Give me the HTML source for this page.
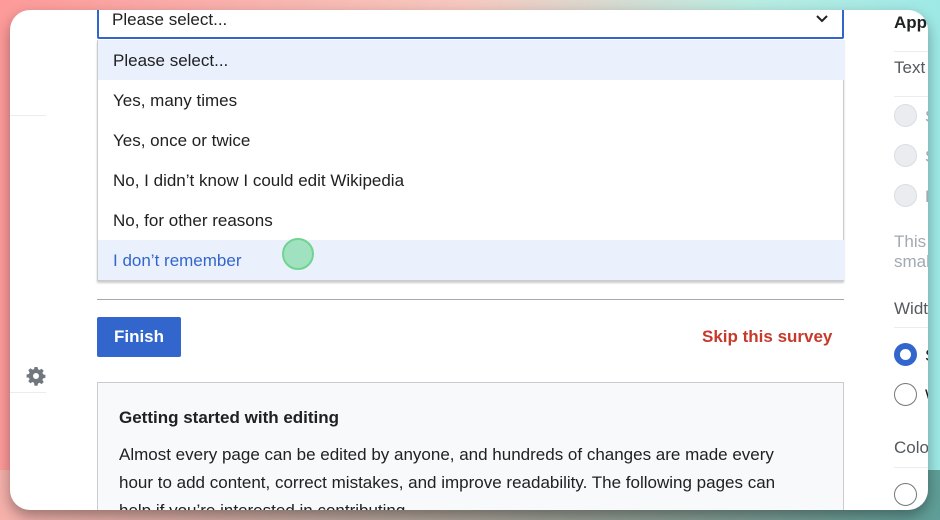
<!DOCTYPE html>
<html><head><style>
body{margin:0;width:940px;height:520px;overflow:hidden;background:linear-gradient(90deg,#fd9a9a 0%,#f6c9c0 50%,#b9ece2 80%,#9ee9e6 100%);font-family:"Liberation Sans",sans-serif;position:relative}
.bot{position:absolute;left:0;top:470px;width:940px;height:50px;background:linear-gradient(90deg,#f6b1ab,#c8a9a0 30%,#9a9f95 60%,#5f9e98)}
.card{position:absolute;left:10px;top:10px;width:918px;height:500px;background:#fff;border-radius:20px;overflow:hidden;box-shadow:0 6px 14px rgba(0,0,0,.35)}
.a{position:absolute}
.t{font-size:17px;color:#202122}
.item{position:absolute;left:0;width:747px;height:40px;line-height:42px;padding-left:15px;box-sizing:border-box;font-size:17px;color:#202122}
</style></head><body>
<div class="bot"></div>
<div class="card">
 <div class="a" style="left:0;top:105px;width:36px;height:1px;background:#eaecf0"></div>
 <div class="a" style="left:0;top:382px;width:36px;height:1px;background:#eaecf0"></div>
 <svg class="a" style="left:16px;top:356px" width="20" height="20" viewBox="0 0 20 20"><path fill="#72777d" d="M8.5 1h3l.5 2.3 1.6.7 2-1.3 2.1 2.1-1.3 2 .7 1.6 2.3.5v3l-2.3.5-.7 1.6 1.3 2-2.1 2.1-2-1.3-1.6.7-.5 2.3h-3L8 16.7l-1.6-.7-2 1.3-2.1-2.1 1.3-2-.7-1.6L.6 11.5v-3L2.9 8l.7-1.6-1.3-2 2.1-2.1 2 1.3L8 3.3zM10 7a3 3 0 100 6 3 3 0 000-6z"/></svg>

 <div class="a" style="left:87px;top:-20px;width:747px;height:49px;border:2px solid #36c;border-radius:2px;box-sizing:border-box"></div>
 <div class="a t" style="left:102px;top:0px">Please select...</div>
 <svg class="a" style="left:805px;top:4px" width="14" height="10" viewBox="0 0 14 10"><path d="M2 2l5 5 5-5" stroke="#202122" stroke-width="2" fill="none"/></svg>

 <div class="a" style="left:87px;top:30px;width:747px;height:241px;border:1px solid #c8ccd1;border-top:none;box-sizing:border-box;box-shadow:0 2px 2px rgba(0,0,0,.2);background:#fff">
  <div class="item" style="top:0;background:#eaf0fc">Please select...</div>
  <div class="item" style="top:40px">Yes, many times</div>
  <div class="item" style="top:80px">Yes, once or twice</div>
  <div class="item" style="top:120px">No, I didn’t know I could edit Wikipedia</div>
  <div class="item" style="top:160px">No, for other reasons</div>
  <div class="item" style="top:200px;background:#eaf0fc;color:#3366cc">I don’t remember</div>
 </div>
 <div class="a" style="left:272px;top:228px;width:32px;height:32px;border-radius:50%;background:#a0e2bf;border:2px solid #6fd490;box-sizing:border-box"></div>

 <div class="a" style="left:87px;top:289px;width:747px;height:1px;background:#a2a9b1"></div>
 <div class="a" style="left:87px;top:307px;width:84px;height:40px;background:#36c;border-radius:2px;color:#fff;font-weight:bold;font-size:17px;line-height:40px;text-align:center">Finish</div>
 <div class="a" style="left:692px;top:317px;font-weight:bold;font-size:17px;color:#c7392b">Skip this survey</div>

 <div class="a" style="left:87px;top:372px;width:747px;height:140px;background:#f8f9fa;border:1px solid #c8ccd1;box-sizing:border-box">
  <div class="a" style="left:21px;top:25px;font-weight:bold;font-size:17px;color:#202122">Getting started with editing</div>
  <div class="a t" style="left:21px;top:58px;line-height:28px;width:690px">Almost every page can be edited by anyone, and hundreds of changes are made every hour to add content, correct mistakes, and improve readability. The following pages can help if you’re interested in contributing.</div>
 </div>

 <div class="a" style="left:884px;top:3px;font-weight:bold;font-size:17px;color:#202122">Appearance</div>
 <div class="a" style="left:884px;top:41px;width:40px;height:1px;background:#eaecf0"></div>
 <div class="a" style="left:884px;top:48px;font-size:17px;color:#54595d">Text</div>
 <div class="a" style="left:884px;top:86px;width:40px;height:1px;background:#eaecf0"></div>
 <div class="a" style="left:884px;top:94px;width:23px;height:23px;border-radius:50%;background:#eaecf0;border:1px solid #dadde3;box-sizing:border-box"></div>
 <div class="a" style="left:884px;top:134px;width:23px;height:23px;border-radius:50%;background:#eaecf0;border:1px solid #dadde3;box-sizing:border-box"></div>
 <div class="a" style="left:884px;top:174px;width:23px;height:23px;border-radius:50%;background:#eaecf0;border:1px solid #dadde3;box-sizing:border-box"></div>
 <div class="a" style="left:915px;top:97px;font-size:17px;color:#a2a9b1">S</div>
 <div class="a" style="left:915px;top:137px;font-size:17px;color:#a2a9b1">S</div>
 <div class="a" style="left:915px;top:177px;font-size:17px;color:#a2a9b1">L</div>
 <div class="a" style="left:884px;top:222px;font-size:17px;color:#a2a9b1;line-height:20px">This<br>smal</div>
 <div class="a" style="left:884px;top:289px;font-size:17px;color:#54595d">Width</div>
 <div class="a" style="left:884px;top:317px;width:40px;height:1px;background:#eaecf0"></div>
 <div class="a" style="left:884px;top:333px;width:23px;height:23px;border-radius:50%;border:6px solid #36c;box-sizing:border-box;background:#fff"></div>
 <div class="a" style="left:884px;top:373px;width:23px;height:23px;border-radius:50%;border:1px solid #72777d;box-sizing:border-box"></div>
 <div class="a" style="left:915px;top:336px;font-size:17px;color:#202122">S</div>
 <div class="a" style="left:915px;top:376px;font-size:17px;color:#202122">W</div>
 <div class="a" style="left:884px;top:428px;font-size:17px;color:#54595d">Color</div>
 <div class="a" style="left:884px;top:457px;width:40px;height:1px;background:#eaecf0"></div>
 <div class="a" style="left:884px;top:473px;width:23px;height:23px;border-radius:50%;border:1px solid #72777d;box-sizing:border-box"></div>
 <div class="a" style="left:915px;top:476px;font-size:17px;color:#202122">A</div>
</div>
</body></html>
